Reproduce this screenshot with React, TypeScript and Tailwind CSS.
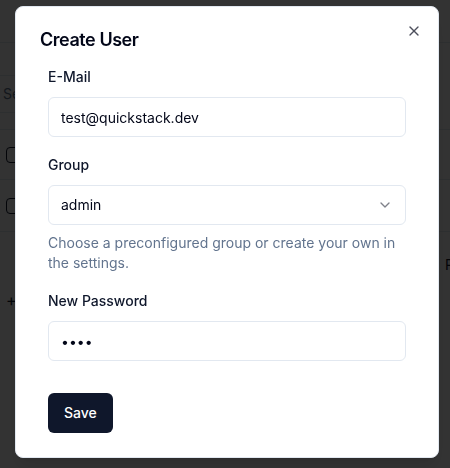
import { X, ChevronDown } from "lucide-react"

// page that sits behind the dialog, mostly hidden by it
function BackgroundPage() {
  return (
    <div className="ml-[-10px] w-[470px] text-sm text-slate-900">
      <div className="h-[43px] border-b border-slate-200" />
      <div className="pt-[32px]">
        <div className="flex h-[38px] w-[420px] items-center rounded-md border border-slate-200 px-3 text-slate-500">
          Search...
        </div>
      </div>
      <div className="mt-[16px] border-t border-slate-200">
        <div className="flex h-[50px] items-center border-b border-slate-200 pl-[16px]">
          <div className="h-4 w-4 rounded-sm border border-slate-900" />
        </div>
        <div className="flex h-[52px] items-center border-b border-slate-200 pl-[16px]">
          <div className="h-4 w-4 rounded-sm border border-slate-900" />
        </div>
      </div>
      <div className="flex justify-end pr-[5px] pt-[23px]">
        <span className="w-[10px] overflow-hidden whitespace-nowrap">Page 1</span>
      </div>
      <div className="pl-[16px] pt-[17px] text-base leading-none">+</div>
    </div>
  )
}

function Field({ label, children }: { label: string; children: React.ReactNode }) {
  return (
    <div className="flex flex-col gap-[10px]">
      <label className="block text-sm font-medium leading-5 text-slate-900">{label}</label>
      {children}
    </div>
  )
}

export default function App() {
  return (
    <div className="relative h-[468px] w-[450px] overflow-hidden bg-white font-['Inter',sans-serif]">
      <BackgroundPage />
      <div className="fixed inset-0 bg-black/80" />

      <div
        role="dialog"
        className="fixed left-[15px] top-[6px] w-[424px] rounded-lg border border-slate-200 bg-white p-6 shadow-lg"
      >
        <h2 className="text-lg font-semibold leading-none tracking-tight text-slate-950">Create User</h2>

        <form className="mt-[18px] flex flex-col px-2" onSubmit={(e) => e.preventDefault()}>
          <div className="flex flex-col gap-[18px]">
            <Field label="E-Mail">
              <input
                className="h-10 w-full rounded-md border border-slate-200 bg-white px-3 py-2 text-sm text-slate-950 outline-none"
                defaultValue="test@quickstack.dev"
              />
            </Field>

            <div className="flex flex-col">
              <Field label="Group">
                <button
                  type="button"
                  className="flex h-10 w-full items-center justify-between rounded-md border border-slate-200 bg-white px-3 py-2 text-sm text-slate-950"
                >
                  <span>admin</span>
                  <ChevronDown className="h-4 w-4 opacity-50" />
                </button>
              </Field>
              <p className="mt-2 text-sm leading-5 text-slate-500">
                Choose a preconfigured group or create your own in the settings.
              </p>
            </div>

            <Field label="New Password">
              <input
                type="password"
                className="h-10 w-full rounded-md border border-slate-200 bg-white px-3 py-2 text-sm text-slate-950 outline-none"
                defaultValue="1234"
              />
            </Field>
          </div>

          <div className="mt-8">
            <button
              type="submit"
              className="inline-flex h-10 items-center justify-center rounded-md bg-slate-900 px-4 text-sm font-medium text-white"
            >
              Save
            </button>
          </div>
        </form>

        <button
          type="button"
          className="absolute right-4 top-4 rounded-sm text-slate-950 opacity-70"
          aria-label="Close"
        >
          <X className="h-4 w-4" />
        </button>
      </div>
    </div>
  )
}
